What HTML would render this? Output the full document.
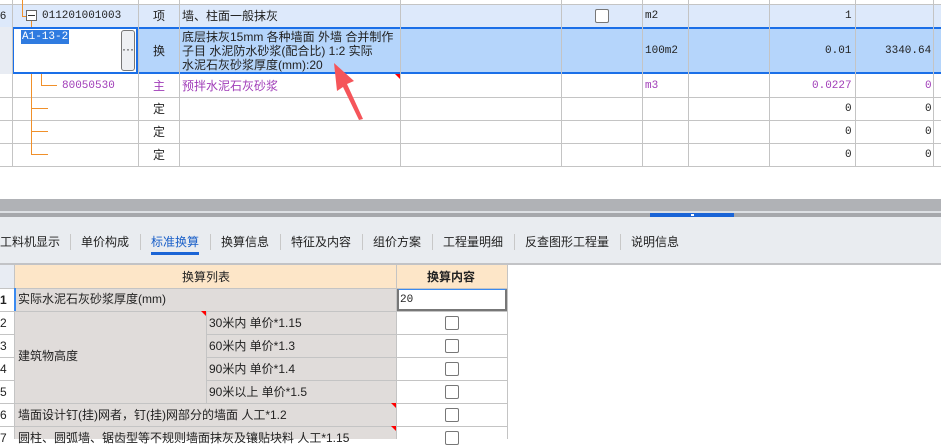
<!DOCTYPE html>
<html><head><meta charset="utf-8"><style>
*{margin:0;padding:0;box-sizing:border-box}
body{width:941px;height:439px;overflow:hidden;background:#fff;font-family:"Liberation Sans","Noto Sans CJK SC",sans-serif;font-size:12px;color:#222;position:relative}
.a{position:absolute}
.vl{position:absolute;width:1px;background:#c4c4c4}
.hl{position:absolute;height:1px;background:#c4c4c4}
.t{position:absolute;white-space:nowrap;line-height:14px}
.m{font-family:"Liberation Mono",monospace;font-size:11px}
.cb{position:absolute;width:14px;height:14px;border:1px solid #777;border-radius:2px;background:#fff}
.tab{position:absolute;top:233px;font-size:12px;color:#222}
.sep{position:absolute;top:234px;width:1px;height:16px;background:#c8c8c8}
.g{background:#e0dcda}
.rn{position:absolute;left:0;width:14px;font-size:12px;color:#222}
</style></head><body>
<!-- top table -->
<div class="a" style="left:0;top:4px;width:941px;height:23px;background:#dde9fb"></div>
<div class="a" style="left:0;top:27px;width:941px;height:47px;background:#b5d5fb"></div>
<div class="a" style="left:0;top:27px;width:12px;height:47px;background:#e8ecf3"></div>
<div class="a" style="left:12px;top:27px;width:126px;height:47px;background:#fff;border:2px solid #1a6fe8"></div>
<div class="a" style="left:138px;top:27px;width:803px;height:2px;background:#1a6fe8"></div>
<div class="a" style="left:138px;top:72px;width:803px;height:2px;background:#1a6fe8"></div>
<div class="t m" style="left:21px;top:30px;color:#fff;background:#2f7be0;padding:0 1px">A1-13-2</div>
<div class="a" style="left:121px;top:30px;width:14px;height:41px;border:1px solid #777;border-radius:3px;background:#eef0f3"></div>
<div class="t" style="left:122px;top:42px">···</div>
<div class="hl" style="left:0;top:4px;width:941px"></div>
<div class="hl" style="left:0;top:97px;width:941px"></div>
<div class="hl" style="left:0;top:120px;width:941px"></div>
<div class="hl" style="left:0;top:143px;width:941px"></div>
<div class="hl" style="left:0;top:166px;width:941px"></div>
<div class="vl" style="left:12px;top:0;height:167px"></div>
<div class="vl" style="left:138px;top:0;height:167px"></div>
<div class="vl" style="left:179px;top:0;height:167px"></div>
<div class="vl" style="left:400px;top:0;height:167px"></div>
<div class="vl" style="left:561px;top:0;height:167px"></div>
<div class="vl" style="left:642px;top:0;height:167px"></div>
<div class="vl" style="left:688px;top:0;height:167px"></div>
<div class="vl" style="left:769px;top:0;height:167px"></div>
<div class="vl" style="left:855px;top:0;height:167px"></div>
<div class="vl" style="left:933px;top:0;height:167px"></div>
<!-- tree lines -->
<div class="a" style="left:22px;top:0;width:1px;height:16px;background:#f0902a"></div>
<div class="a" style="left:22px;top:16px;width:4px;height:1px;background:#f0902a"></div>
<div class="a" style="left:31px;top:21px;width:1px;height:6px;background:#f0902a"></div>
<div class="a" style="left:31px;top:74px;width:1px;height:81px;background:#f0902a"></div>
<div class="a" style="left:41px;top:74px;width:1px;height:12px;background:#f0902a"></div>
<div class="a" style="left:41px;top:85px;width:16px;height:1px;background:#f0902a"></div>
<div class="a" style="left:31px;top:108px;width:17px;height:1px;background:#f0902a"></div>
<div class="a" style="left:31px;top:131px;width:17px;height:1px;background:#f0902a"></div>
<div class="a" style="left:31px;top:154px;width:17px;height:1px;background:#f0902a"></div>
<div class="a" style="left:26px;top:10px;width:11px;height:11px;border:1px solid #666;background:#fff"></div>
<div class="a" style="left:28px;top:15px;width:7px;height:1px;background:#333"></div>
<div class="t" style="left:0;top:9px;font-size:11px">6</div>
<div class="t m" style="left:42px;top:9px">011201001003</div>
<div class="t" style="left:153px;top:9px">项</div>
<div class="t" style="left:182px;top:9px">墙、柱面一般抹灰</div>
<div class="cb" style="left:595px;top:9px"></div>
<div class="t m" style="left:645px;top:9px">m2</div>
<div class="t m" style="left:845px;top:9px">1</div>
<div class="t" style="left:153px;top:44px">换</div>
<div class="t" style="left:182px;top:30px;line-height:14px">底层抹灰15mm 各种墙面 外墙  合并制作<br>子目 水泥防水砂浆(配合比) 1:2  实际<br>水泥石灰砂浆厚度(mm):20</div>
<div class="t m" style="left:645px;top:44px">100m2</div>
<div class="t m" style="left:825px;top:44px">0.01</div>
<div class="t m" style="left:885px;top:44px">3340.64</div>
<div class="t m" style="left:62px;top:79px;color:#a03cb8">80050530</div>
<div class="t" style="left:153px;top:79px;color:#a03cb8">主</div>
<div class="t" style="left:182px;top:79px;color:#a03cb8">预拌水泥石灰砂浆</div>
<div class="t m" style="left:645px;top:79px;color:#a03cb8">m3</div>
<div class="t m" style="left:812px;top:79px;color:#a03cb8">0.0227</div>
<div class="t m" style="left:925px;top:79px;color:#a03cb8">0</div>
<div class="a" style="left:395px;top:74px;width:0;height:0;border-top:5px solid red;border-left:5px solid transparent"></div>
<div class="t" style="left:153px;top:102px">定</div><div class="t m" style="left:845px;top:102px">0</div><div class="t m" style="left:925px;top:102px">0</div>
<div class="t" style="left:153px;top:125px">定</div><div class="t m" style="left:845px;top:125px">0</div><div class="t m" style="left:925px;top:125px">0</div>
<div class="t" style="left:153px;top:148px">定</div><div class="t m" style="left:845px;top:148px">0</div><div class="t m" style="left:925px;top:148px">0</div>
<svg class="a" style="left:0;top:0" width="941" height="170"><polygon points="334,63 354,81 347,84 363,119 359,120 343,87 337,91" fill="#f5555a"/></svg>
<!-- splitter -->
<div class="a" style="left:0;top:199px;width:941px;height:12px;background:#b0b2b6"></div>
<div class="a" style="left:0;top:211px;width:941px;height:2px;background:#dde0e4"></div>
<div class="a" style="left:0;top:213px;width:941px;height:4px;background:#a6a8ac"></div>
<div class="a" style="left:650px;top:213px;width:84px;height:5px;background:#1a64d6"></div>
<div class="a" style="left:691px;top:214px;width:3px;height:2px;background:#fff"></div>
<!-- tabs -->
<div class="a" style="left:0;top:217px;width:941px;height:47px;background:#e9ecf0"></div>
<div class="a" style="left:0;top:263px;width:941px;height:2px;background:#c2c3c6"></div>
<div class="tab" style="left:0">工料机显示</div><div class="sep" style="left:70px"></div>
<div class="tab" style="left:81px">单价构成</div><div class="sep" style="left:140px"></div>
<div class="tab" style="left:151px;color:#1a5fc8">标准换算</div>
<div class="a" style="left:151px;top:252px;width:48px;height:3px;background:#1a64d6"></div><div class="sep" style="left:210px"></div>
<div class="tab" style="left:221px">换算信息</div><div class="sep" style="left:280px"></div>
<div class="tab" style="left:291px">特征及内容</div><div class="sep" style="left:362px"></div>
<div class="tab" style="left:373px">组价方案</div><div class="sep" style="left:432px"></div>
<div class="tab" style="left:443px">工程量明细</div><div class="sep" style="left:514px"></div>
<div class="tab" style="left:525px">反查图形工程量</div><div class="sep" style="left:620px"></div>
<div class="tab" style="left:631px">说明信息</div>
<!-- bottom table -->
<div class="a" style="left:0;top:265px;width:14px;height:23px;background:#e8ecf3"></div>
<div class="a" style="left:15px;top:265px;width:492px;height:23px;background:#fde6c8"></div>
<div class="t" style="left:182px;top:270px;font-size:12px">换算列表</div>
<div class="t" style="left:427px;top:270px;font-size:12px;font-weight:bold">换算内容</div>
<div class="a g" style="left:15px;top:289px;width:381px;height:150px"></div>
<div class="a" style="left:397px;top:288px;width:110px;height:151px;background:#fff"></div>
<div class="a" style="left:397px;top:288px;width:110px;height:23px;border:2px solid #777;border-top:2px solid #3a8af0"></div>
<div class="t m" style="left:400px;top:293px">20</div>
<div class="hl" style="left:0;top:288px;width:508px"></div>
<div class="hl" style="left:0;top:311px;width:508px"></div>
<div class="hl" style="left:206px;top:334px;width:302px"></div><div class="hl" style="left:0;top:334px;width:15px"></div>
<div class="hl" style="left:206px;top:357px;width:302px"></div><div class="hl" style="left:0;top:357px;width:15px"></div>
<div class="hl" style="left:206px;top:380px;width:302px"></div><div class="hl" style="left:0;top:380px;width:15px"></div>
<div class="hl" style="left:0;top:403px;width:508px"></div>
<div class="hl" style="left:0;top:426px;width:508px"></div>
<div class="vl" style="left:14px;top:265px;height:174px"></div>
<div class="vl" style="left:206px;top:311px;height:92px"></div>
<div class="vl" style="left:396px;top:265px;height:174px"></div>
<div class="vl" style="left:507px;top:265px;height:174px"></div>
<div class="a" style="left:14px;top:288px;width:2px;height:23px;background:#3a8af0"></div>
<div class="rn" style="top:293px;font-weight:bold">1</div><div class="rn" style="top:316px">2</div><div class="rn" style="top:339px">3</div><div class="rn" style="top:362px">4</div><div class="rn" style="top:385px">5</div><div class="rn" style="top:408px">6</div><div class="rn" style="top:431px">7</div>
<div class="t" style="left:18px;top:292px">实际水泥石灰砂浆厚度(mm)</div>
<div class="t" style="left:18px;top:349px">建筑物高度</div>
<div class="t" style="left:209px;top:316px">30米内 单价*1.15</div>
<div class="t" style="left:209px;top:339px">60米内 单价*1.3</div>
<div class="t" style="left:209px;top:362px">90米内 单价*1.4</div>
<div class="t" style="left:209px;top:385px">90米以上 单价*1.5</div>
<div class="t" style="left:18px;top:408px">墙面设计钉(挂)网者，钉(挂)网部分的墙面 人工*1.2</div>
<div class="t" style="left:18px;top:431px">圆柱、圆弧墙、锯齿型等不规则墙面抹灰及镶贴块料 人工*1.15</div>
<div class="a" style="left:201px;top:311px;border-top:5px solid red;border-left:5px solid transparent"></div>
<div class="a" style="left:391px;top:403px;border-top:5px solid red;border-left:5px solid transparent"></div>
<div class="a" style="left:391px;top:426px;border-top:5px solid red;border-left:5px solid transparent"></div>
<div class="cb" style="left:445px;top:316px"></div>
<div class="cb" style="left:445px;top:339px"></div>
<div class="cb" style="left:445px;top:362px"></div>
<div class="cb" style="left:445px;top:385px"></div>
<div class="cb" style="left:445px;top:408px"></div>
<div class="cb" style="left:445px;top:431px"></div>
</body></html>
